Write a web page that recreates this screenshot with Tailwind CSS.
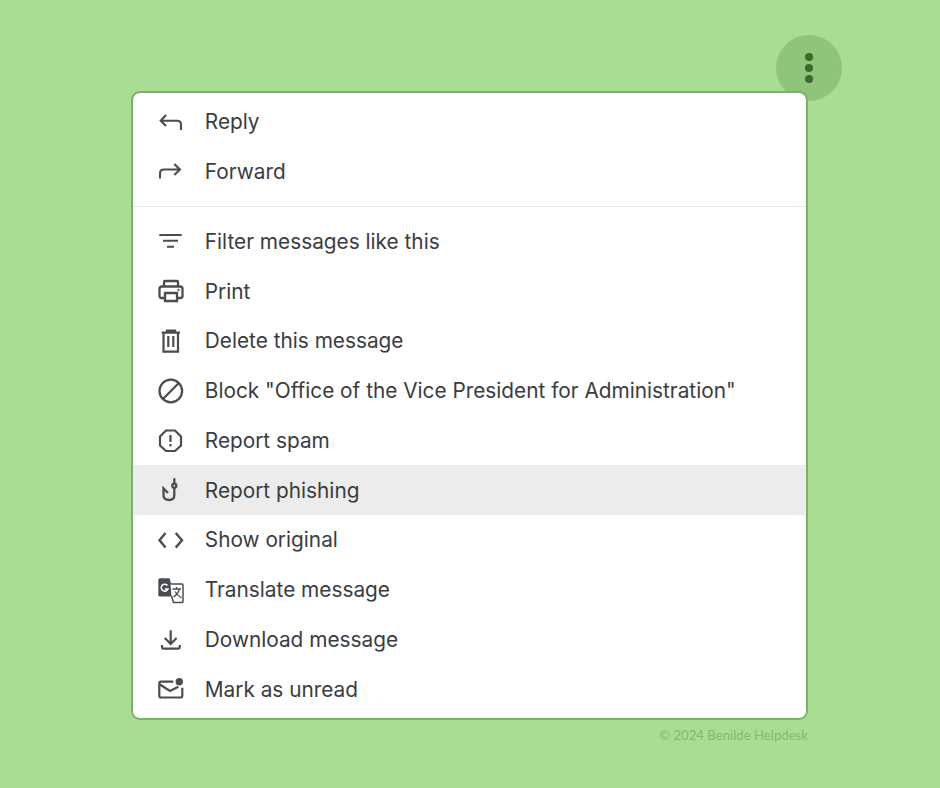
<!DOCTYPE html>
<html><head><meta charset="utf-8"><script src="https://cdn.jsdelivr.net/npm/@tailwindcss/browser@4"></script></head>
<body class="m-0">
<div class="relative w-[940px] h-[788px] overflow-hidden bg-[#a9dd93] font-['Inter',sans-serif] text-[#3a3c3f]">
  <div class="absolute left-[776px] top-[35px] w-[66px] h-[66px] rounded-full bg-[#8fc47b] flex flex-col items-center justify-center gap-[3px]">
    <span class="w-[8px] h-[8px] rounded-full bg-[#386b2a]"></span><span class="w-[8px] h-[8px] rounded-full bg-[#386b2a]"></span><span class="w-[8px] h-[8px] rounded-full bg-[#386b2a]"></span>
  </div>
  <div class="absolute left-[131px] top-[91px] w-[677px] h-[629px] bg-white border-2 border-[#7db06a] rounded-[9px] pt-[3.400px] overflow-hidden text-[20.8px]">
    <div class="flex items-center h-[50px] pl-[24px]"><svg class="w-[28px] h-[28px] mr-[19.800px]" viewBox="0 0 28 28" fill="none" stroke="#4a4d50" stroke-width="2.100"><path d="M9 8 L3.700 13.700 L9 19 M4 13.700 H20 Q24 13.700 24 17.500 V23"/></svg><span>Reply</span></div>
    <div class="flex items-center h-[50px] pl-[24px]"><svg class="w-[28px] h-[28px] mr-[19.800px]" viewBox="0 0 28 28" fill="none" stroke="#4a4d50" stroke-width="2.100"><path d="M17.300 7 L23 12.500 L17.300 18 M22.500 12.500 H7 Q3 12.500 3 16.500 V21.500"/></svg><span>Forward</span></div>
    <div class="h-[1px] bg-[#e8e8e8] mt-[10px] mb-[9px]"></div>
    <div class="flex items-center h-[50px] pl-[24px]"><svg class="w-[28px] h-[28px] mr-[19.800px]" viewBox="0 0 28 28" fill="none" stroke="#4a4d50" stroke-width="2.100"><path d="M2.300 8 H24.700 M6 13.700 H21 M10 19.700 H17"/></svg><span>Filter messages like this</span></div>
    <div class="flex items-center h-[49.600px] pl-[24px]"><svg class="w-[28px] h-[28px] mr-[19.800px]" viewBox="0 0 28 28" fill="none" stroke="#4a4d50" stroke-width="2.300"><path d="M7 9 V5 Q7 4 8 4 H20 Q21 4 21 5 V9 M8 21 H4.500 Q2.500 21 2.500 19 V12 Q2.500 9.500 5 9.500 H23 Q25.500 9.500 25.500 12 V19 Q25.500 21 23.500 21 H20 M8 16 H20 V24 H8 Z"/><circle cx="21.500" cy="13" r="0.800" fill="#4a4d50" stroke-width="0.800"/></svg><span>Print</span></div>
    <div class="flex items-center h-[49.800px] pl-[24px]"><svg class="w-[28px] h-[28px] mr-[19.800px]" viewBox="0 0 28 28" fill="none" stroke="#4a4d50" stroke-width="2.200"><path d="M4.700 5.700 H23 M10 5.700 V3.700 H18 V5.700 M6.500 5.700 V24.700 H21 V5.700 M11.300 9 V20 M16.300 9 V20"/></svg><span>Delete this message</span></div>
    <div class="flex items-center h-[49.800px] pl-[24px]"><svg class="w-[28px] h-[28px] mr-[19.800px]" viewBox="0 0 28 28" fill="none" stroke="#4a4d50" stroke-width="2.300"><circle cx="13.800" cy="14" r="11.300"/><path d="M6 22 L21.800 6"/></svg><span>Block "Office of the Vice President for Administration"</span></div>
    <div class="flex items-center h-[49.800px] pl-[24px]"><svg class="w-[28px] h-[28px] mr-[19.800px]" viewBox="0 0 28 28" fill="none" stroke="#4a4d50" stroke-width="2.200"><path d="M9 4.500 H18 L24 10.500 V19.500 L18 25 H9 L3 19.500 V10.500 Z"/><path d="M13.500 9 V16 M13.500 18 V20.500"/></svg><span>Report spam</span></div>
    <div class="flex items-center h-[49.800px] pl-[24px] bg-[#ececec]"><svg class="w-[28px] h-[28px] mr-[19.800px]" viewBox="0 0 28 28" fill="none" stroke="#4a4d50" stroke-width="2.300"><circle cx="17.300" cy="9.700" r="2"/><path d="M17.300 2.300 V7.700 M17.300 11.700 V19 Q17.300 24 12.300 24 Q6.500 24 6.500 19 V12.300 L11 17"/></svg><span>Report phishing</span></div>
    <div class="flex items-center h-[49.700px] pl-[24px]"><svg class="w-[28px] h-[28px] mr-[19.800px]" viewBox="0 0 28 28" fill="none" stroke="#4a4d50" stroke-width="2.400"><path d="M8.500 7 L2.500 14.300 L8.500 21.600 M18.700 7 L25 14.300 L18.700 21.600"/></svg><span>Show original</span></div>
    <div class="flex items-center h-[49.800px] pl-[24px]"><svg class="w-[28px] h-[28px] mr-[19.800px]" viewBox="0 0 28 28"><path d="M1.300 4 Q1.300 2.300 3 2.300 H12.500 L18 20.500 H3 Q1.300 20.500 1.300 19 Z" fill="#4a4d50"/><path d="M13.500 8 H25 Q26 8 26 9 V25.500 Q26 26.500 25 26.500 H16.500 L14.500 20" fill="#fff" stroke="#4a4d50" stroke-width="1.500"/><path d="M10.500 9.500 A3.500 3.500 0 1 0 11 13 H7.800" fill="none" stroke="#fff" stroke-width="1.500"/><path d="M15.500 13 H24 M19.500 11 V13 M22.500 13 Q21 18 16.500 21 M18 15.500 Q20 19 24.500 22" fill="none" stroke="#4a4d50" stroke-width="1.300"/></svg><span>Translate message</span></div>
    <div class="flex items-center h-[49.800px] pl-[24px]"><svg class="w-[28px] h-[28px] mr-[19.800px]" viewBox="0 0 28 28" fill="none" stroke="#4a4d50" stroke-width="2.200"><path d="M13.700 4.300 V17.500 M7.800 12 L13.700 18 L19.600 12 M5 19 V21 Q5 22.700 6.700 22.700 H21 Q22.700 22.700 22.700 21 V19"/></svg><span>Download message</span></div>
    <div class="flex items-center h-[49.700px] pl-[24px]"><svg class="w-[28px] h-[28px] mr-[19.800px]" viewBox="0 0 28 28" fill="none" stroke="#4a4d50" stroke-width="2.200"><path d="M16.300 6.700 H4 Q2.300 6.700 2.300 8.500 V20.500 Q2.300 22.500 4 22.500 H23.500 Q25.300 22.500 25.300 20.500 V12.700 M2.500 9.300 L13 16 L21.300 11.700"/><circle cx="22.300" cy="6.700" r="3.700" fill="#4a4d50" stroke="none"/></svg><span>Mark as unread</span></div>
  </div>
  <div class="absolute right-[132px] top-[727px] text-[13px] leading-[16px] tracking-[0.08px] text-[#85b873] font-['Lato',sans-serif]">© 2024 Benilde Helpdesk</div>
</div>
</body></html>
